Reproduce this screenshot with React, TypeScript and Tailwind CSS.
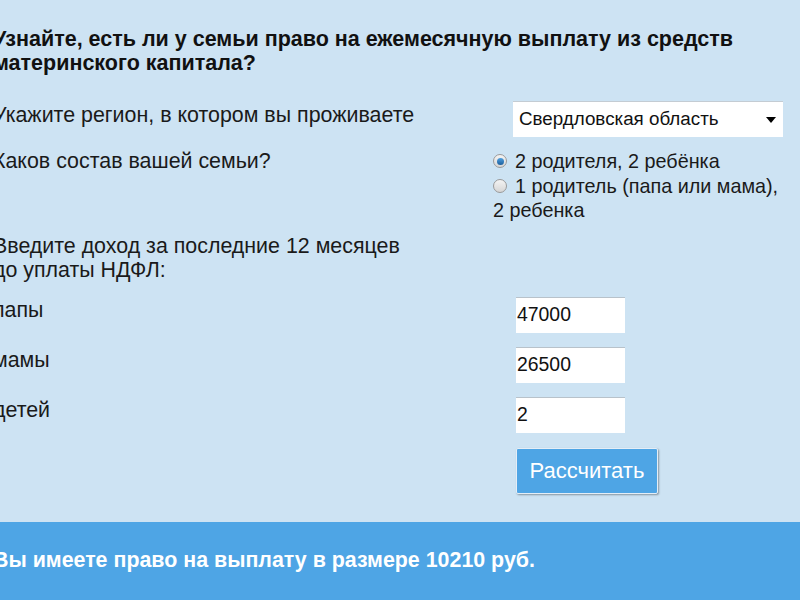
import { useState } from 'react'

const font = { fontFamily: '"Liberation Sans", Arial, sans-serif' }

function Radio({ checked }: { checked: boolean }) {
  return (
    <span className="mt-[5px] flex h-[14px] w-[14px] shrink-0 items-center justify-center rounded-full border border-[#9a9a9a] bg-gradient-to-b from-[#f4f4f4] to-[#d6d6d6]">
      {checked && <span className="h-[7px] w-[7px] rounded-full bg-gradient-to-b from-[#4fa0e0] to-[#1c5f9c]" />}
    </span>
  )
}

function NumberField({ value }: { value: string }) {
  return (
    <div className="flex h-[36px] w-[109px] items-center border-t border-[#b8c2ca] bg-white pl-[1px] text-[19.4px] text-[#111]">
      {value}
    </div>
  )
}

export default function App() {
  const [family] = useState(0)

  return (
    <div className="flex h-[600px] w-[800px] flex-col overflow-hidden bg-[#cde3f3] text-[21.4px] text-[#1a1a1a]" style={font}>
      <div className="ml-[-7px] flex flex-col">
        <h1 className="mt-[27px] whitespace-nowrap text-[21.5px] font-bold leading-[24px] text-[#111]">
          Узнайте, есть ли у семьи право на ежемесячную выплату из средств<br />
          материнского капитала?
        </h1>

        <div className="mt-[27px] flex items-start">
          <div className="w-[520px] pt-[1px] leading-[24px]">Укажите регион, в котором вы проживаете</div>
          <div className="flex h-[35px] w-[270px] items-center justify-between bg-white pl-[6px] pr-[7px] text-[18.8px] text-[#111] shadow-[0_-1px_0_#c4ccd3]">
            <span>Свердловская область</span>
            <span className="h-0 w-0 border-x-[5px] border-t-[6px] border-x-transparent border-t-black" />
          </div>
        </div>

        <div className="mt-[12px] flex items-start">
          <div className="w-[500px] leading-[24px]">Каков состав вашей семьи?</div>
          <div className="flex w-[300px] flex-col text-[19.8px] leading-[24.5px]">
            <div className="flex items-start gap-[8px]">
              <Radio checked={family === 0} />
              <span>2 родителя, 2 ребёнка</span>
            </div>
            <div className="flex items-start gap-[8px]">
              <Radio checked={family === 1} />
              <span className="whitespace-nowrap">1 родитель (папа или мама),</span>
            </div>
            <div>2 ребенка</div>
          </div>
        </div>

        <div className="mt-[11px] leading-[24px]">
          Введите доход за последние 12 месяцев<br />
          до уплаты НДФЛ:
        </div>

        <div className="mt-[15px] flex flex-col gap-[14px]">
          {[
            ['папы', '47000'],
            ['мамы', '26500'],
            ['детей', '2'],
          ].map(([label, value]) => (
            <div key={label} className="flex items-start">
              <div className="w-[523px] pt-[1px] leading-[24px]">{label}</div>
              <NumberField value={value} />
            </div>
          ))}
        </div>

        <div className="mt-[15px] flex">
          <div className="w-[523px]" />
          <button className="h-[46px] w-[142px] rounded-[2px] border border-[#e4eef7] bg-[#4ea5e5] text-[22px] text-white shadow-[1px_1px_2px_rgba(0,0,0,0.35)]">
            Рассчитать
          </button>
        </div>
      </div>

      <div className="mt-auto flex h-[78px] items-center bg-[#4ea5e5] pb-[1px]">
        <span className="ml-[-7px] text-[21.4px] font-bold text-white">
          Вы имеете право на выплату в размере 10210 руб.
        </span>
      </div>
    </div>
  )
}
